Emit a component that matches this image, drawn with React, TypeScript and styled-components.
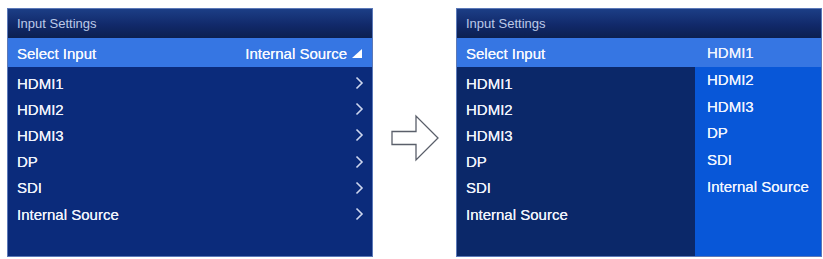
import React from "react";
import styled, { createGlobalStyle } from "styled-components";

const Global = createGlobalStyle`
  html, body { margin: 0; padding: 0; background: #ffffff; }
  body { font-family: "Liberation Sans", Arial, sans-serif; }
`;

const Page = styled.div`
  width: 823px;
  height: 259px;
  display: flex;
  align-items: flex-start;
  padding: 8px 0 0 7px;
  box-sizing: border-box;
`;

const Panel = styled.div<{ $dark?: boolean }>`
  position: relative;
  width: 366px;
  height: 249px;
  box-sizing: border-box;
  background: ${(p) => (p.$dark ? "#0b2869" : "#0b2b7b")};
  border: 1px solid #5b79b8;
  display: flex;
  flex-direction: column;
  overflow: hidden;
`;

const Header = styled.div`
  height: 29px;
  flex: none;
  display: flex;
  align-items: center;
  padding-left: 9px;
  background: linear-gradient(#1c3e86, #11296a 55%, #0c2050);
  color: #bccae8;
  font-size: 13px;
`;

const SelectRow = styled.div`
  height: 29px;
  flex: none;
  display: flex;
  align-items: center;
  justify-content: space-between;
  padding: 1px 10px 0 9px;
  box-sizing: border-box;
  background: #3676e3;
  color: #f6f8ff;
  font-size: 15px;
  text-shadow: 0 0 0.5px #ffffff;
`;

const Value = styled.span`
  display: flex;
  align-items: center;
  gap: 5px;
`;

const List = styled.div`
  display: flex;
  flex-direction: column;
  padding-top: 3px;
`;

const Row = styled.div`
  height: 26.2px;
  display: flex;
  align-items: center;
  justify-content: space-between;
  padding: 0 8px 0 9px;
  color: #eef2fc;
  font-size: 15px;
  text-shadow: 0 0 0.5px #ffffff;
`;

const Dropdown = styled.div`
  position: absolute;
  left: 238px;
  top: 29px;
  right: 0;
  bottom: 0;
  background: #0857d8;
  display: flex;
  flex-direction: column;
`;

const DropItem = styled.div<{ $active?: boolean }>`
  height: ${(p) => (p.$active ? "29px" : "26.8px")};
  display: flex;
  align-items: center;
  padding-left: 12px;
  padding-bottom: ${(p) => (p.$active ? "0" : "2px")};
  box-sizing: border-box;
  background: ${(p) => (p.$active ? "#3676e3" : "transparent")};
  color: #eef3ff;
  font-size: 15px;
  text-shadow: 0 0 0.5px #ffffff;
`;

const ArrowArea = styled.div`
  width: 83px;
  height: 249px;
  display: flex;
  align-items: center;
  justify-content: center;
  padding-top: 10px;
  box-sizing: border-box;
`;

const Chevron = () => (
  <svg width="9" height="14" viewBox="0 0 9 14">
    <polyline points="1.5,1.5 7,7 1.5,12.5" fill="none" stroke="#cdd6ee" strokeWidth="1.6" />
  </svg>
);

const Tri = () => (
  <svg width="10" height="9" viewBox="0 0 10 9">
    <polygon points="0,9 10,9 10,0" fill="#ffffff" />
  </svg>
);

const BigArrow = () => (
  <svg width="50" height="48" viewBox="0 0 50 48">
    <polygon
      points="2,17.5 26,17.5 26,2 48,24 26,46 26,30.5 2,30.5"
      fill="#ffffff"
      stroke="#5a5f6a"
      strokeWidth="1.3"
      strokeLinejoin="miter"
    />
  </svg>
);

const sources = ["HDMI1", "HDMI2", "HDMI3", "DP", "SDI", "Internal Source"];

export default function App() {
  return (
    <>
      <Global />
      <Page>
        <Panel>
          <Header>Input Settings</Header>
          <SelectRow>
            <span>Select Input</span>
            <Value>
              Internal Source <Tri />
            </Value>
          </SelectRow>
          <List>
            {sources.map((s) => (
              <Row key={s}>
                <span>{s}</span>
                <Chevron />
              </Row>
            ))}
          </List>
        </Panel>
        <ArrowArea>
          <BigArrow />
        </ArrowArea>
        <Panel $dark>
          <Header>Input Settings</Header>
          <SelectRow>
            <span>Select Input</span>
          </SelectRow>
          <List>
            {sources.map((s) => (
              <Row key={s}>
                <span>{s}</span>
              </Row>
            ))}
          </List>
          <Dropdown>
            {sources.map((s, i) => (
              <DropItem key={s} $active={i === 0}>
                {s}
              </DropItem>
            ))}
          </Dropdown>
        </Panel>
      </Page>
    </>
  );
}
